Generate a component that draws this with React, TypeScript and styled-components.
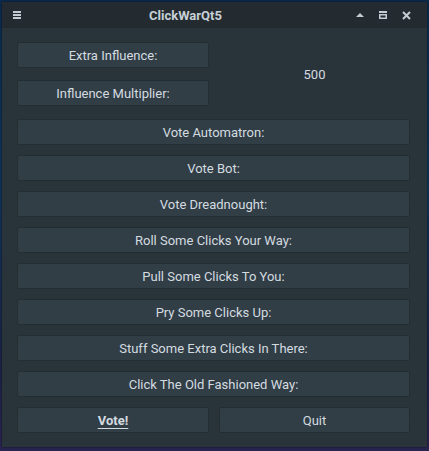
import React from "react";
import styled, { createGlobalStyle } from "styled-components";

const Global = createGlobalStyle`
  html, body { margin: 0; padding: 0; }
  body {
    width: 429px;
    height: 451px;
    overflow: hidden;
    background: linear-gradient(180deg, #0c2a4c 0%, #10345a 40%, #1b2446 80%, #2a2450 100%);
    font-family: Roboto, "Noto Sans", "Liberation Sans", sans-serif;
  }
`;

const Window = styled.div`
  margin: 2px 0 0 2px;
  width: 425px;
  height: 445px;
  background: #29333a;
  display: flex;
  flex-direction: column;
  box-shadow: 0 0 2px rgba(0, 0, 0, 0.6);
`;

const TitleBar = styled.div`
  height: 26px;
  background: #232b30;
  display: flex;
  align-items: center;
  padding: 0 10px;
  color: #c9d3da;
`;

const TitleText = styled.div`
  flex: 1;
  text-align: center;
  font-weight: 700;
  font-size: 13px;
  color: #c6d0d7;
`;

const IconBtn = styled.div<{ $w: number }>`
  width: ${(p) => p.$w}px;
  height: 26px;
  display: flex;
  align-items: center;
  justify-content: center;
`;

const Body = styled.div`
  flex: 1;
  padding: 14px 17px 14px 15px;
  display: flex;
  flex-direction: column;
`;

const TopGrid = styled.div`
  display: grid;
  grid-template-columns: 192px 1fr;
  grid-template-rows: 26px 26px;
  column-gap: 10px;
  row-gap: 12px;
  margin-bottom: 13px;
`;

const ValueLabel = styled.div`
  grid-column: 2;
  grid-row: 1 / span 2;
  display: flex;
  align-items: center;
  justify-content: center;
  color: #d4dbe0;
  font-size: 13px;
`;

const List = styled.div`
  display: flex;
  flex-direction: column;
  gap: 10px;
`;

const BottomRow = styled.div`
  display: grid;
  grid-template-columns: 192px 1fr;
  column-gap: 10px;
  margin-top: 10px;
`;

const Button = styled.button<{ $underline?: boolean }>`
  height: 26px;
  margin: 0;
  padding: 0;
  border: 1px solid #242d32;
  border-radius: 2px;
  background: #313e45;
  color: #d4dbe0;
  font-family: Roboto, "Noto Sans", "Liberation Sans", sans-serif;
  font-size: 13px;
  font-weight: ${(p) => (p.$underline ? 700 : 400)};
  text-decoration: ${(p) => (p.$underline ? "underline" : "none")};
  text-underline-offset: 3px;
  cursor: pointer;
`;

const items = [
  "Vote Automatron:",
  "Vote Bot:",
  "Vote Dreadnought:",
  "Roll Some Clicks Your Way:",
  "Pull Some Clicks To You:",
  "Pry Some Clicks Up:",
  "Stuff Some Extra Clicks In There:",
  "Click The Old Fashioned Way:",
];

export default function App() {
  return (
    <>
      <Global />
      <Window>
        <TitleBar>
          <IconBtn $w={10}>
            <svg width="8" height="8" viewBox="0 0 8 8">
              <rect x="0" y="0" width="8" height="2" fill="#c3ccd3" />
              <rect x="0" y="3" width="8" height="2" fill="#c3ccd3" />
              <rect x="0" y="6" width="8" height="2" fill="#c3ccd3" />
            </svg>
          </IconBtn>
          <TitleText>ClickWarQt5</TitleText>
          <IconBtn $w={22}>
            <svg width="8" height="4" viewBox="0 0 8 4">
              <polygon points="0,4 4,0 8,4" fill="#c3ccd3" />
            </svg>
          </IconBtn>
          <IconBtn $w={24}>
            <svg width="8" height="8" viewBox="0 0 8 8">
              <rect x="0" y="0" width="8" height="2" fill="#c3ccd3" />
              <rect x="0" y="3" width="8" height="5" fill="#c3ccd3" />
              <rect x="1.5" y="4.5" width="5" height="2" fill="#232b30" />
            </svg>
          </IconBtn>
          <IconBtn $w={22}>
            <svg width="9" height="9" viewBox="0 0 9 9">
              <path d="M1 1 L8 8 M8 1 L1 8" stroke="#c3ccd3" strokeWidth="2" />
            </svg>
          </IconBtn>
        </TitleBar>
        <Body>
          <TopGrid>
            <Button>Extra Influence:</Button>
            <ValueLabel>500</ValueLabel>
            <Button>Influence Multiplier:</Button>
          </TopGrid>
          <List>
            {items.map((t) => (
              <Button key={t}>{t}</Button>
            ))}
          </List>
          <BottomRow>
            <Button $underline>Vote!</Button>
            <Button>Quit</Button>
          </BottomRow>
        </Body>
      </Window>
    </>
  );
}
